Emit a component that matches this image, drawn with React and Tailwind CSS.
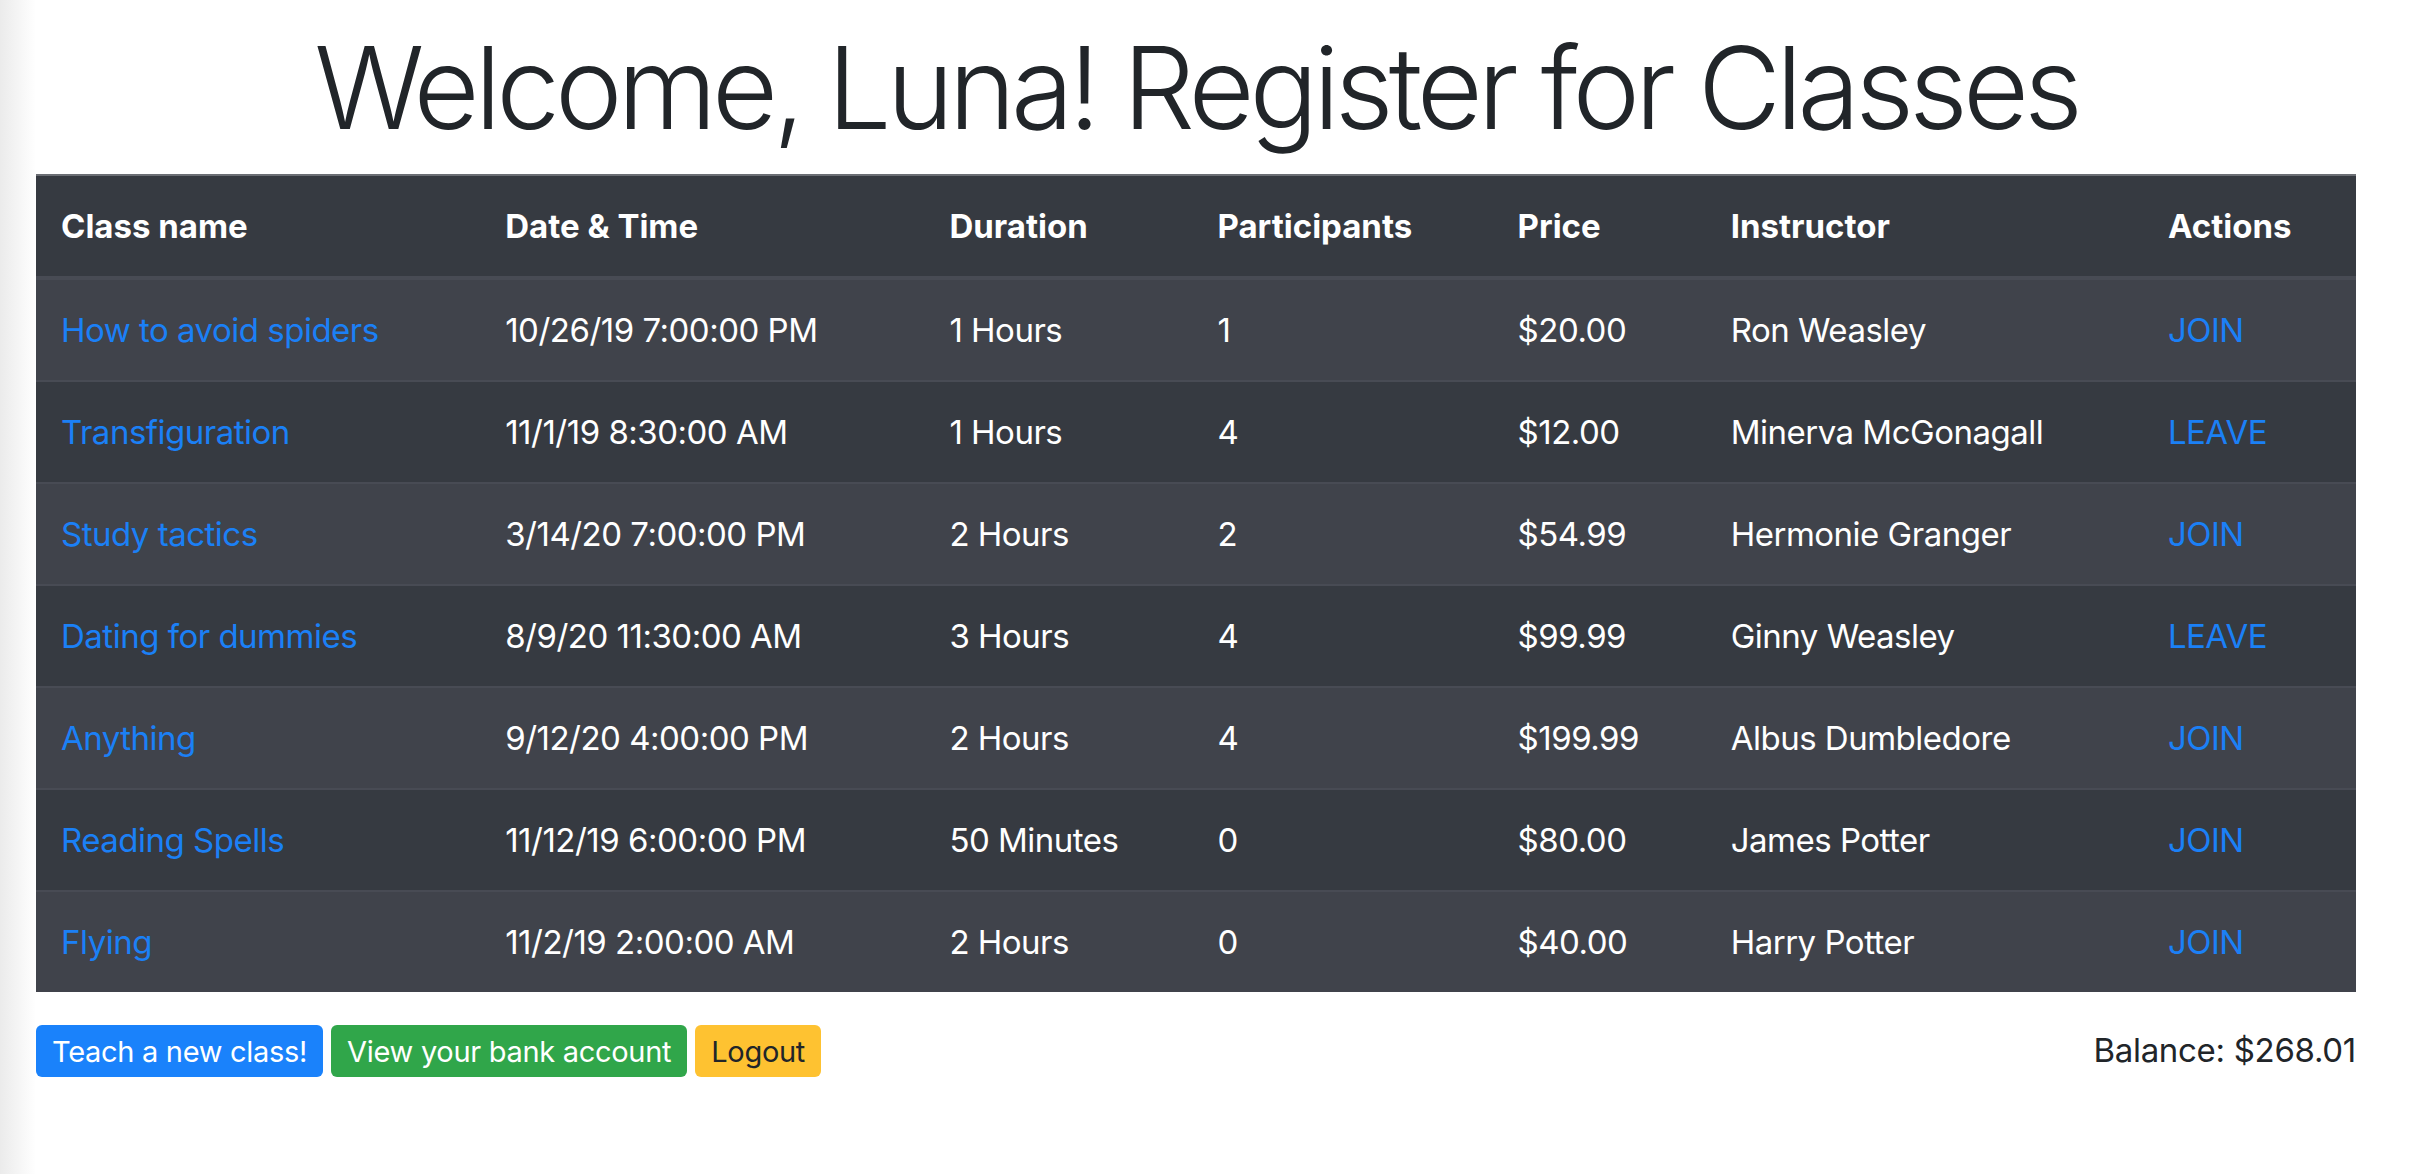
import React from "react";

const classes = [
  { name: "How to avoid spiders", date: "10/26/19 7:00:00 PM", duration: "1 Hours", participants: 1, price: "$20.00", instructor: "Ron Weasley", action: "JOIN" },
  { name: "Transfiguration", date: "11/1/19 8:30:00 AM", duration: "1 Hours", participants: 4, price: "$12.00", instructor: "Minerva McGonagall", action: "LEAVE" },
  { name: "Study tactics", date: "3/14/20 7:00:00 PM", duration: "2 Hours", participants: 2, price: "$54.99", instructor: "Hermonie Granger", action: "JOIN" },
  { name: "Dating for dummies", date: "8/9/20 11:30:00 AM", duration: "3 Hours", participants: 4, price: "$99.99", instructor: "Ginny Weasley", action: "LEAVE" },
  { name: "Anything", date: "9/12/20 4:00:00 PM", duration: "2 Hours", participants: 4, price: "$199.99", instructor: "Albus Dumbledore", action: "JOIN" },
  { name: "Reading Spells", date: "11/12/19 6:00:00 PM", duration: "50 Minutes", participants: 0, price: "$80.00", instructor: "James Potter", action: "JOIN" },
  { name: "Flying", date: "11/2/19 2:00:00 AM", duration: "2 Hours", participants: 0, price: "$40.00", instructor: "Harry Potter", action: "JOIN" },
];

const headers = ["Class name", "Date & Time", "Duration", "Participants", "Price", "Instructor", "Actions"];
const widths = ["w-[444px]", "w-[444px]", "w-[268px]", "w-[300px]", "w-[213px]", "w-[437px]", "w-[213px]"];

function App() {
  return (
    <div className="min-h-screen bg-white font-['Inter','Liberation_Sans',sans-serif] text-[#212529] flex">
      {/* window shadow on the left edge */}
      <div className="w-[36px] shrink-0 bg-gradient-to-r from-[#ebebeb] to-white" />

      <div className="w-[2320px] shrink-0">
        <h1 className="mt-[18px] mb-[16px] text-center text-[114px] leading-[140px] font-light tracking-[-5px] text-[#212529]">
          Welcome, Luna! Register for Classes
        </h1>

        <table className="w-full table-fixed bg-[#363a41] text-white text-[33px] leading-[50px]">
          <colgroup>
            {widths.map((w, i) => (
              <col key={i} className={w} />
            ))}
          </colgroup>
          <thead>
            <tr>
              {headers.map((h) => (
                <th
                  key={h}
                  className="px-[25px] py-[25px] text-left font-bold border-t-2 border-t-[#6b6e74] border-b-4 border-b-[#484b54]"
                >
                  {h}
                </th>
              ))}
            </tr>
          </thead>
          <tbody className="tracking-[-0.5px]">
            {classes.map((c, i) => (
              <tr key={c.name} className={i % 2 === 0 ? "bg-[#40434b]" : "bg-[#363a41]"}>
                <td className="px-[25px] py-[25px] border-t-2 border-[#484b54] text-[#1b80f6]">{c.name}</td>
                <td className="px-[25px] py-[25px] border-t-2 border-[#484b54]">{c.date}</td>
                <td className="px-[25px] py-[25px] border-t-2 border-[#484b54]">{c.duration}</td>
                <td className="px-[25px] py-[25px] border-t-2 border-[#484b54]">{c.participants}</td>
                <td className="px-[25px] py-[25px] border-t-2 border-[#484b54]">{c.price}</td>
                <td className="px-[25px] py-[25px] border-t-2 border-[#484b54]">{c.instructor}</td>
                <td className="px-[25px] py-[25px] border-t-2 border-[#484b54] text-[#1b80f6]">{c.action}</td>
              </tr>
            ))}
          </tbody>
        </table>

        <div className="mt-[33px] flex items-center justify-between">
          <div className="flex gap-[8px] text-[29px] tracking-[-0.3px]">
            <button className="h-[52px] px-[16px] rounded-[6px] bg-[#1a82fb] text-white leading-none">
              Teach a new class!
            </button>
            <button className="h-[52px] px-[16px] rounded-[6px] bg-[#30a64a] text-white leading-none">
              View your bank account
            </button>
            <button className="h-[52px] px-[16px] rounded-[6px] bg-[#fec231] text-[#212529] leading-none">
              Logout
            </button>
          </div>
          <div className="text-[33px] tracking-[-0.3px] text-[#212529]">Balance: $268.01</div>
        </div>
      </div>
    </div>
  );
}

export default App;
